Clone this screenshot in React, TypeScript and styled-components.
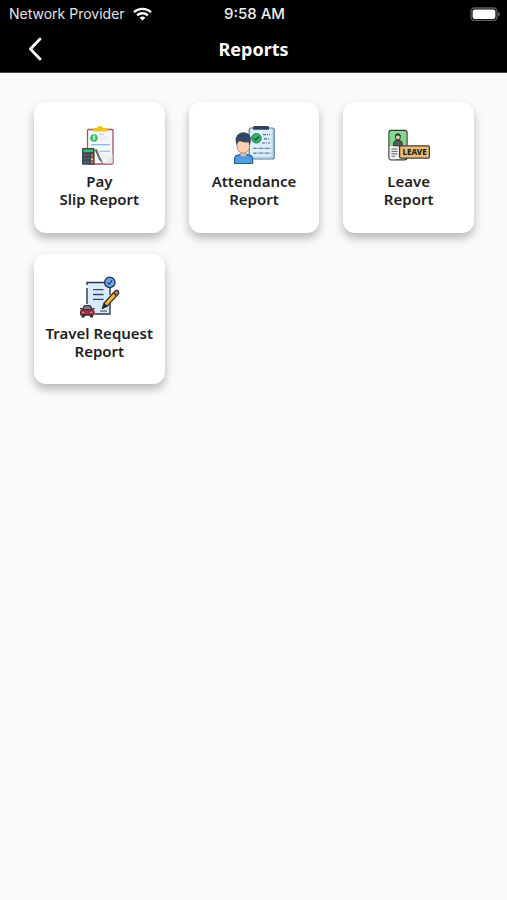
import React from "react";
import styled, { createGlobalStyle } from "styled-components";

const GlobalStyle = createGlobalStyle`
  *, *::before, *::after { box-sizing: border-box; }
  body {
    margin: 0;
    background: #fafafa;
    color: #222;
    font-family: "Noto Sans", "Open Sans", sans-serif;
  }
`;

const Header = styled.header`
  padding-bottom: 1px;
  background: #000;
  color: #fff;
  border-bottom: 1px solid #444;
`;

const StatusBar = styled.div`
  display: grid;
  grid-template-columns: 1fr auto 1fr;
  align-items: center;
  height: 27px;
  padding: 0 7px 0 9px;
  font-family: Inter, sans-serif;
  font-size: 14px;
  line-height: 18px;
`;

const Carrier = styled.div`
  display: flex;
  align-items: center;
  gap: 8px;
  color: #e4e4e4;
  white-space: nowrap;
`;

const Clock = styled.time`
  font-size: 15px;
  font-weight: 500;
  color: #f0f0f0;
`;

const Battery = styled.svg`
  display: block;
  justify-self: end;
`;

const NavBar = styled.nav`
  display: grid;
  grid-template-columns: 48px 1fr 48px;
  align-items: center;
  height: 44px;
  padding: 0 11px;
`;

const BackButton = styled.button`
  display: grid;
  place-items: center;
  width: 48px;
  height: 44px;
  padding: 0;
  border: 0;
  background: none;
  color: #fff;
  cursor: pointer;
`;

const Title = styled.h1`
  margin: 0;
  font-size: 18px;
  line-height: 24px;
  font-weight: 700;
  text-align: center;
`;

const ReportGrid = styled.main`
  display: grid;
  grid-template-columns: repeat(3, 1fr);
  gap: 21px 24px;
  padding: 29px 33px 29px 34px;
`;

const ReportCard = styled.button`
  display: flex;
  flex-direction: column;
  align-items: center;
  gap: 6px;
  aspect-ratio: 1;
  padding: 20px 4px 0;
  border: 0;
  border-radius: 12px;
  background: #fff;
  color: #222;
  box-shadow: 0 5px 10px rgba(0, 0, 0, 0.27);
  font: inherit;
  cursor: pointer;
`;

const CardLabel = styled.span`
  font-size: 15px;
  line-height: 18px;
  font-weight: 600;
  text-align: center;
  white-space: nowrap;
`;

const CardIcon = styled.svg.attrs({
  width: 44,
  height: 44,
  viewBox: "0 0 44 44",
  fill: "none",
  "aria-hidden": true,
})`
  display: block;
  flex: none;
  overflow: visible;
`;

const SignText = styled.text`
  font-family: "Noto Sans", sans-serif;
  font-size: 8px;
  font-weight: 800;
  text-anchor: middle;
`;

const PaySlipIcon = () => (
  <CardIcon>
    <rect x="10.5" y="7.5" width="25.5" height="34.5" rx="1" fill="#f4f6f8" stroke="#a85560" strokeWidth="1.3" />
    <path d="M28 41.5 35.5 32v9.5Z" fill="#e4e8ec" />
    <path d="M16 9.5V7.2q0-1.2 1.4-1.2H20l1.4-2h3.4l1.4 2h3q1.4 0 1.4 1.2v2.3Z" fill="#f2c51f" />
    <circle cx="17" cy="16" r="3.8" fill="#35bd6b" />
    <path d="M18.2 14.3q-2.5-.6-2.3.5t2.1 1.1q.8 1.8-2.2 1.4M17 13.4v5" stroke="#e9fff0" strokeWidth=".7" />
    <path d="M22 12.3h5" stroke="#a9cdec" />
    <path d="M14 22.6h19M22 29.3h11" stroke="#7dbce9" strokeWidth="1.1" />
    <path d="M22 15.8h9M22 18h7M24 33h8M26 36h6" stroke="#e1e5e9" strokeWidth=".8" />
    <rect x="5" y="26" width="12.6" height="16.8" rx=".8" fill="#3f4855" />
    <rect x="6.6" y="27.5" width="9.4" height="2.6" fill="#3cbf70" />
    <path d="M7 33h5.5M7 36.5h5.5M7 40h5.5" stroke="#606c7b" strokeWidth="1.6" strokeDasharray="2.2 1" />
    <path d="M15 32v3.3" stroke="#e94f55" strokeWidth="2" />
    <path d="M15 36v2.2" stroke="#f0bd34" strokeWidth="2" />
    <path d="M15 38.7v2.5" stroke="#ec7049" strokeWidth="2" />
    <path d="m18.8 27.5 4.5 10.3" stroke="#48535d" strokeWidth="2" />
    <path d="m19.8 29.3 3.6 8" stroke="#9da56f" strokeWidth=".8" />
    <path d="m22.3 37.8 2-.8 1.7 5Z" fill="#65616a" />
  </CardIcon>
);

const AttendanceIcon = () => (
  <CardIcon>
    <rect x="17.2" y="6" width="25" height="31" rx="2" fill="#dceefa" stroke="#577594" strokeWidth="1.2" />
    <path d="M40.3 7.5v27.8H20" stroke="#b9d5ec" strokeWidth="1.4" />
    <path d="M22.5 4h13.2q1.3 0 1.3 1.3v2.5H21V5.3Q21 4 22.5 4Z" fill="#31415f" />
    <path d="M31 12.7h7M32 16.8h6M30 21h8M21.5 26.3h17M21.5 31.2h17" stroke="#536a83" strokeWidth="1.2" strokeDasharray="3 1 1 1" />
    <circle cx="24.4" cy="16.3" r="4.8" fill="#36b464" stroke="#297a60" />
    <path d="m22 16.4 1.8 1.8 3.1-3.8" stroke="#173e39" strokeWidth="1.2" />
    <path d="M2.6 41.5v-4.2q0-3.9 4.2-4.4l2-.9h5.4l2 .9q4.4.5 4.4 4.4v4.2Z" fill="#4d9fe2" stroke="#315c91" strokeWidth="1.2" />
    <path d="M8.5 29h5.7v4q-2.8 3-5.7 0Z" fill="#eebc99" />
    <path d="M5 18h12.5v5.5q0 7-6.3 7.8Q5 30.5 5 23.5Z" fill="#fbd0ae" stroke="#a9796e" strokeWidth=".8" />
    <path d="M4.6 23.5q-3-9.7 3.2-12.3 2.4-1.4 5.4-.7 6.8 1.1 5.5 9.4l-1 3.6-1.3-3.2q-6.2.4-8.4-1.3-1.4.8-2.2 1.5Z" fill="#354766" />
  </CardIcon>
);

const LeaveIcon = () => (
  <CardIcon>
    <rect x="2" y="8.5" width="18" height="29.3" rx="2.3" fill="#fff" stroke="#2f3635" strokeWidth="1.3" />
    <path d="M2.8 24V10.7q0-1.4 1.4-1.4h13.6q1.4 0 1.4 1.4V24Z" fill="#83d78b" />
    <path d="M6.7 24v-2.8q0-2.4 3-2.7h2.4q3 .3 3 2.7V24Z" fill="#555c60" stroke="#252c2b" />
    <rect x="8.5" y="12.3" width="4.7" height="5.3" rx="1.8" fill="#d7cda6" stroke="#24302a" />
    <path d="M8.2 14.4v-1.2q0-1.7 2.7-1.7t2.7 1.7v1.2l-1.6-.8H9.7Z" fill="#25312b" />
    <path d="M2.7 24.4h9v9.3l-2.8 3.5H2.7Z" fill="#f0f1f1" />
    <path d="M4.5 27h6M4.5 29.4h6M4.5 31.8h6M4.5 34.2h3.7" stroke="#626768" />
    <rect x="12.6" y="23.8" width="29.8" height="12.3" rx="1.3" fill="#ecbc72" stroke="#443c32" strokeWidth="1.3" />
    <SignText x="27.5" y="32.8" fill="#211e1a">LEAVE</SignText>
  </CardIcon>
);

const TravelIcon = () => (
  <CardIcon>
    <path d="M10.2 33V8.6H33v31.2H15Z" fill="#d9eafb" />
    <path d="M10 14v16M10 11V8.5h18M33 14v7M33 29v11H18" stroke="#28384d" strokeWidth="1.4" />
    <path d="M16 15.7h10.5M16 20.5h10.5M16 25.3h10.5" stroke="#34485f" strokeWidth="1.3" />
    <path d="M23 37h7" stroke="#4d6274" strokeWidth="1.2" />
    <circle cx="32.8" cy="8.4" r="5.2" fill="#69a7ed" stroke="#293b59" strokeWidth="1.4" />
    <path d="m30.5 8.6 1.6 1.6 3-3.8" stroke="#203b68" strokeWidth="1.2" />
    <path d="m27 29.3 9.5-10.5 3.2 2.8-9.5 10.5-4.5 2Z" fill="#f4b53b" stroke="#382f2b" strokeWidth="1.3" />
    <path d="m36.5 18.8 1.8-1.9q1.8-1 3.1.6 1 1.5-.3 2.8l-1.4 1.4Z" fill="#d9825a" stroke="#382f2b" strokeWidth="1.3" />
    <path d="m27 29.3 3.1 2.8-4.8 2.5Z" fill="#302e30" stroke="#302e30" />
    <path d="M4.5 39v4.4h2.8l1-2.4h4l1 2.4H16V39Z" fill="#342a32" />
    <path d="M5.3 35.7 7 32.4q.4-.7 1.2-.7h4.2q.8 0 1.2.7l1.7 3.3Z" fill="#77818c" stroke="#33313b" strokeWidth="1.2" />
    <path d="M4.3 35.8h12q1.4 1.4.7 5.2H3.6q-.7-3.8.7-5.2Z" fill="#a92f40" stroke="#4c2632" />
    <path d="M3 34.7h2M15.6 34.7h2M8 40.8h4.5" stroke="#35272f" strokeWidth="1.3" />
    <path d="m5.2 38 2 .7M15.3 38l-2 .7" stroke="#e9a390" strokeWidth="1.2" />
  </CardIcon>
);

const reports = [
  { id: "pay", lines: ["Pay", "Slip Report"], Icon: PaySlipIcon },
  { id: "attendance", lines: ["Attendance", "Report"], Icon: AttendanceIcon },
  { id: "leave", lines: ["Leave", "Report"], Icon: LeaveIcon },
  { id: "travel", lines: ["Travel Request", "Report"], Icon: TravelIcon },
];

export default function App() {
  return (
    <>
      <GlobalStyle />
      <Header>
        <StatusBar>
          <Carrier>
            Network Provider
            <svg width="19" height="14" viewBox="0 0 19 14" role="img" aria-label="Wi-Fi">
              <g fill="none" stroke="#fff" strokeWidth="2.3">
                <path d="M1 5.2a12.3 12.3 0 0 1 17 0" />
                <path d="M4.1 8.4a7.8 7.8 0 0 1 10.8 0" />
              </g>
              <path d="M6.6 10.8a4.2 4.2 0 0 1 5.8 0L9.5 13.6Z" fill="#fff" />
            </svg>
          </Carrier>
          <Clock>9:58 AM</Clock>
          <Battery width="30" height="14" viewBox="0 0 30 14" role="img" aria-label="Battery full">
            <rect x="1" y="1" width="26" height="12.5" rx="3.5" fill="none" stroke="#5c5c5c" strokeWidth="1.3" />
            <rect x="2.6" y="2.6" width="22.8" height="9.3" rx="2" fill="#fff" />
            <path d="M28.2 5v4.5q1.5-.5 1.5-2.2T28.2 5Z" fill="#6c6c6c" />
          </Battery>
        </StatusBar>
        <NavBar>
          <BackButton type="button" aria-label="Back">
            <svg width="14" height="24" viewBox="0 0 14 24" fill="none" aria-hidden="true">
              <path d="M12 2 2.4 12 12 22" stroke="currentColor" strokeWidth="2.8" strokeLinecap="round" strokeLinejoin="round" />
            </svg>
          </BackButton>
          <Title>Reports</Title>
        </NavBar>
      </Header>
      <ReportGrid>
        {reports.map(({ id, lines, Icon }) => (
          <ReportCard key={id} type="button">
            <Icon />
            <CardLabel>
              {lines[0]}
              <br />
              {lines[1]}
            </CardLabel>
          </ReportCard>
        ))}
      </ReportGrid>
    </>
  );
}
